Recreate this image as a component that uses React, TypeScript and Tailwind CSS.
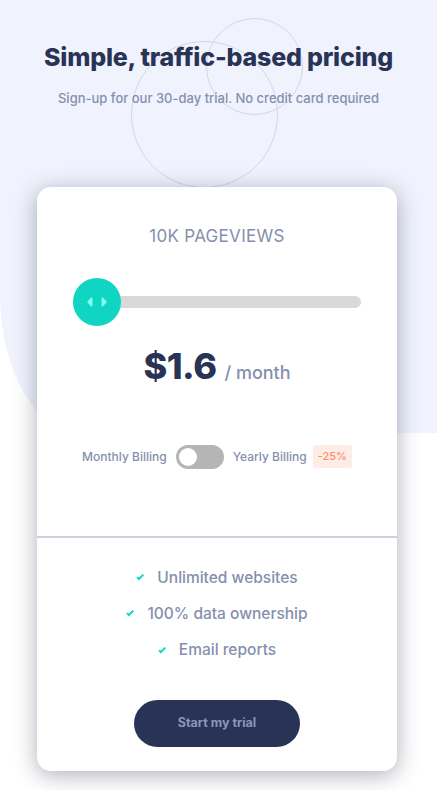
const features = ['Unlimited websites', '100% data ownership', 'Email reports']

function CheckIcon() {
  return (
    <svg width="9" height="8" viewBox="0 0 9 8" className="shrink-0">
      <path d="M1 4.134l1.907 1.908L7.338 1.61" fill="none" stroke="#10d8c4" strokeWidth="2" />
    </svg>
  )
}

function SliderIcon() {
  return (
    <svg width="20" height="12" viewBox="0 0 22 13">
      <path
        d="M16 2.558v7.884a1 1 0 001.735.679l3.639-3.943a1 1 0 000-1.356l-3.64-3.943A1 1 0 0016 2.558zm-10 0v7.884a1 1 0 01-1.735.679L.626 7.178a1 1 0 010-1.356l3.64-3.943A1 1 0 016 2.558z"
        fill="#80fff3"
      />
    </svg>
  )
}

export default function App() {
  return (
    <div
      className="relative min-h-[790px] w-full overflow-hidden bg-white"
      style={{ fontFamily: 'Inter, "Noto Sans", sans-serif' }}
    >
      {/* background pattern */}
      <div className="absolute top-0 left-0 h-[433px] w-full rounded-bl-[80px_140px] bg-[#f0f3fd]" />
      <div className="absolute top-[18px] left-[206px] h-[97px] w-[97px] rounded-full border border-[#d3d7e4]" />
      <div className="absolute top-[41px] left-[131px] h-[147px] w-[147px] rounded-full border border-[#d3d7e4]" />

      <div className="relative flex flex-col items-center">
        <h1 className="mt-[39px] text-[25px] font-extrabold tracking-[-0.2px] text-[#293356]">
          Simple, traffic-based pricing
        </h1>
        <p className="mt-[12px] text-[13px] font-medium text-[#858fad]">
          Sign-up for our 30-day trial. No credit card required
        </p>

        {/* card */}
        <div className="mt-[79px] mr-[3px] flex w-[360px] flex-col rounded-[14px] bg-white shadow-[0_4px_22px_rgba(40,45,70,0.38)]">
          <div className="flex flex-col items-center px-9 pt-[37px] pb-[67px]">
            <p className="text-[17px] tracking-[0.3px] text-[#858fad]">10K PAGEVIEWS</p>

            <div className="relative mt-[28px] flex h-12 w-full items-center">
              <div className="h-3 w-full rounded-full bg-[#d9d9d9]" />
              <div className="absolute top-0 left-0 flex h-12 w-12 items-center justify-center rounded-full bg-[#10d5c2]">
                <SliderIcon />
              </div>
            </div>

            <div className="mt-[13px] flex items-baseline gap-2">
              <span className="text-[36px] font-extrabold tracking-[-0.5px] text-[#293356]">$1.6</span>
              <span className="text-[18px] font-medium text-[#858fad]">/ month</span>
            </div>

            <div className="mt-[52px] flex items-center text-[12px] font-medium text-[#858fad]">
              <span>Monthly Billing</span>
              <div className="mx-[9px] flex h-6 w-12 items-center rounded-full bg-[#b5b5b5] px-[3px]">
                <div className="h-[18px] w-[18px] rounded-full bg-white" />
              </div>
              <span>Yearly Billing</span>
              <span className="ml-[6px] rounded-[3px] bg-[#feece7] px-[5px] py-[3px] text-[11px] text-[#ff8c66]">
                -25%
              </span>
            </div>
          </div>

          <div className="h-[2px] w-full bg-[#cdd0dc]" />

          <div className="flex flex-col items-center pt-[28px] pb-[24px]">
            <ul className="flex flex-col items-center gap-[13px]">
              {features.map((f) => (
                <li key={f} className="flex items-center gap-[12px] text-[15.5px] font-medium text-[#858fad]">
                  <CheckIcon />
                  <span>{f}</span>
                </li>
              ))}
            </ul>

            <button className="mt-[39px] h-[47px] w-[166px] rounded-full bg-[#293356] text-[12.5px] font-bold text-[#8c95ba]">
              Start my trial
            </button>
          </div>
        </div>
      </div>
    </div>
  )
}
